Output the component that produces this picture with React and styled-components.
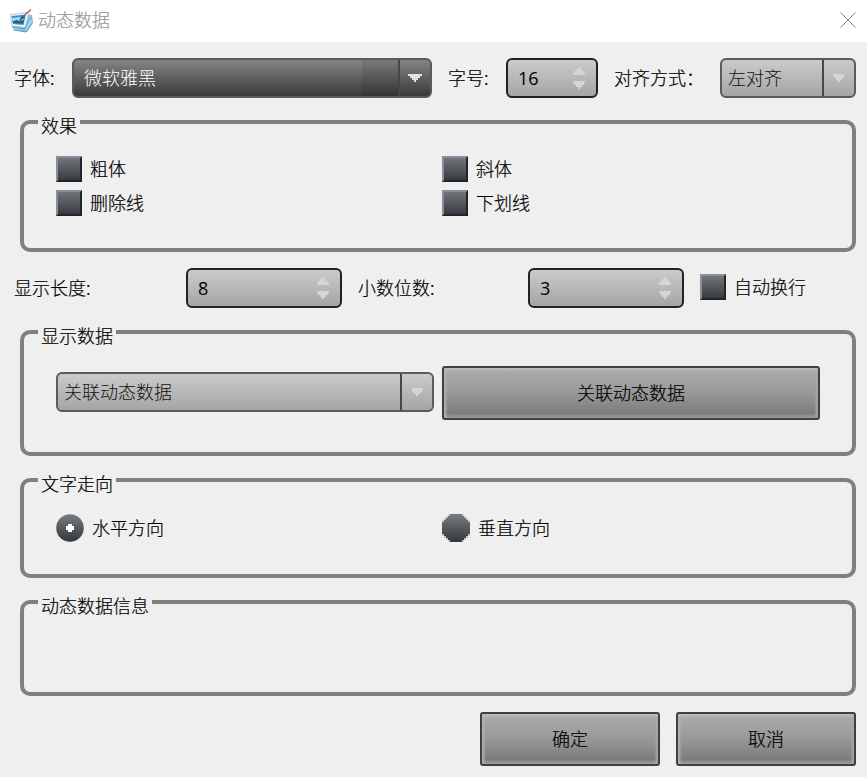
import React from "react";
import styled, { createGlobalStyle, css } from "styled-components";

const GlobalStyle = createGlobalStyle`
  * { box-sizing: border-box; }
  body {
    margin: 0;
    background: #efefef;
    color: #000;
    font: 300 18px/20px "Noto Sans CJK SC", "Noto Sans", sans-serif;
    -webkit-text-stroke: 0.2px currentColor;
  }
`;

const Dialog = styled.div`
  width: 867px;
  height: 777px;
  overflow: hidden;
  background: #efefef;
`;

const TitleBar = styled.header`
  display: flex;
  align-items: center;
  height: 42px;
  padding: 0 11px 3px 9px;
  background: #fff;
  color: #999;
`;

const Title = styled.span`
  flex: 1;
  margin-left: 5px;
  padding-bottom: 2px;
  white-space: nowrap;
`;

const Form = styled.main`
  padding: 16px 11px 0 14px;
`;

const Row = styled.div`
  display: flex;
  align-items: center;
  height: 40px;
`;

const Label = styled.span`
  flex: none;
  width: ${(p) => p.$width}px;
  padding-bottom: 2px;
  margin-left: ${(p) => p.$gap || 0}px;
  white-space: nowrap;
`;

const lightFace = css`
  background: linear-gradient(#cbcbcb, #a5a5a5);
  color: #000;
`;

const darkFace = css`
  background: linear-gradient(#858585, #393939);
  color: #fff;
`;

const Combo = styled.div`
  display: flex;
  flex: none;
  width: ${(p) => p.$width}px;
  height: 40px;
  border: 2px solid #5b5b5b;
  border-radius: 6px;
  ${(p) => (p.$dark ? darkFace : lightFace)}
`;

const ComboText = styled.span`
  display: flex;
  flex: 1;
  align-items: center;
  padding: 0 0 3px ${(p) => (p.$dark ? 10 : 6)}px;
  color: ${(p) => (p.$dark ? "#fff" : "#101010")};
  -webkit-text-stroke: 0;
  ${(p) =>
    p.$dark &&
    css`
      background: linear-gradient(90deg, transparent 288px, rgba(0, 0, 0, 0.09) 288px);
    `}
`;

const ComboArrow = styled.span`
  display: flex;
  align-items: center;
  justify-content: center;
  width: 32px;
  border-left: 2px solid #44484b;
`;

const Spin = styled.div`
  display: flex;
  flex: none;
  align-items: center;
  justify-content: space-between;
  width: ${(p) => p.$width}px;
  height: 40px;
  padding: 0 11px 0 10px;
  border: 2px solid #222;
  border-radius: 6px;
  font-family: "Open Sans", "Noto Sans", sans-serif;
  font-weight: 400;
  -webkit-text-stroke: 0;
  ${lightFace}
`;

const Group = styled.section`
  height: ${(p) => p.$height}px;
  margin: 22px 0 0 6px;
  border: 4px solid #808080;
  border-radius: 10px;
`;

const Legend = styled.h2`
  width: fit-content;
  height: 20px;
  margin: -8px 0 0 14px;
  padding: 0 3px;
  background: #efefef;
  font: inherit;
  line-height: 18px;
`;

const OptionGrid = styled.div`
  display: grid;
  grid-template-columns: 386px 1fr;
  row-gap: 8px;
  padding: 20px 0 0 32px;
`;

const Choice = styled.label`
  display: flex;
  align-items: center;
  gap: 8px;
  white-space: nowrap;
`;

const ChoiceText = styled.span`
  padding-bottom: 2px;
`;

const CheckBox = styled.span`
  width: 26px;
  height: 26px;
  border: 2px solid;
  border-color: #87909a #222427 #222427 #87909a;
  background: linear-gradient(#70757b, #383b3f);
`;

const DataRow = styled.div`
  display: flex;
  align-items: center;
  gap: 8px;
  padding: 20px 32px 0;
`;

const DataSource = styled.div`
  padding-bottom: 2px;
`;

const PushButton = styled.button`
  width: ${(p) => p.$width}px;
  height: 54px;
  padding: 0 0 3px;
  border: 2px solid #404040;
  border-radius: 3px;
  background: linear-gradient(#adadad, #989898 50%, #7b7b7b 92%, #8e8e8e 94%);
  box-shadow: inset 0 3px 2px -1px #bdbdbd, inset 3px 0 3px -1px #b4b4b4,
    inset -3px 0 3px -1px #a8a8a8, inset 0 -2px 1px -1px #969696;
  color: #000;
  font: inherit;
`;

const Actions = styled.footer`
  display: flex;
  justify-content: flex-end;
  gap: 16px;
  margin-top: 16px;
`;

const AppIcon = () => (
  <svg width="24" height="26" viewBox="0 0 24 26">
    <path d="M3 19l2 4 13 2 6-9-1-8-4 0z" fill="#7fbcd9" />
    <path d="M4 20l12 2 5-13 2 7-5 7-13-1z" fill="#b3d9ea" />
    <path d="M3 20l13 2 6-12M5 23l12 2 6-9" fill="none" stroke="#559fc4" />
    <path d="M1 7.5l16-2 3 1-4 14L3 19z" fill="#edf6fa" stroke="#98bdcf" strokeWidth=".7" />
    <path d="M2.5 9L17 7.5 14.5 18 4 17z" fill="#358fd1" />
    <path d="M3 11l8-1 4 3-11 1.5z" fill="#a6dbf2" />
    <path d="M3.5 14.5l4-1.5 3 1 4.5-1-.8 3.5L4 16z" fill="#315f66" />
    <path d="M11 13l4-4" stroke="#413d45" strokeWidth="1.6" />
    <path d="M14 9.5l8-7" stroke="#c9504e" strokeWidth="1.4" />
  </svg>
);

const CloseIcon = () => (
  <svg width="16" height="16" viewBox="0 0 16 16">
    <path d="M.5.5l15 15M15.5.5l-15 15" stroke="#858585" strokeWidth="1" />
  </svg>
);

const DownArrow = ({ dark }) => (
  <svg width="14" height="8" viewBox="0 0 14 8" shapeRendering="crispEdges">
    <path
      d={dark ? "M0 0h14v2h-2v2h-2v2H8v2H6V6H4V4H2V2H0z" : "M1 0h12v1h-1v3h-2v2H8v2H6V6H4V4H2V1H1z"}
      fill={dark ? "#e2e2e2" : "#d5d5d5"}
    />
  </svg>
);

const SpinArrows = () => (
  <svg width="12" height="22" viewBox="0 0 12 22" shapeRendering="crispEdges">
    <path
      d="M5 0h2v2h2v2h2v2h1v2H0V6h1V4h2V2h2zM0 14h12v2h-1v2H9v2H7v2H5v-2H3v-2H1v-2H0z"
      fill="#d5d5d5"
    />
  </svg>
);

const Radio = ({ checked }) => (
  <svg width="28" height="28" viewBox="0 0 28 28">
    <defs>
      <linearGradient id={checked ? "radioOn" : "radioOff"} x2="0" y2="1">
        <stop stopColor="#777c82" />
        <stop offset="1" stopColor="#34373b" />
      </linearGradient>
    </defs>
    {checked ? (
      <>
        <circle cx="14" cy="14" r="13.8" fill="url(#radioOn)" />
        <path d="M12 10h4v2h2v4h-2v2h-4v-2h-2v-4h2z" fill="#fff" />
      </>
    ) : (
      <g shapeRendering="crispEdges">
        <path
          d="M8 0h12v2h2v2h2v2h2v2h2v12h-2v2h-2v2h-2v2h-2v2H8v-2H6v-2H4v-2H2v-2H0V8h2V6h2V4h2V2h2z"
          fill="url(#radioOff)"
        />
        <path
          d="M6 0h2v2H6zM4 2h2v2H4zM2 4h2v2H2zM0 6h2v2H0zM20 0h2v2h-2zM22 2h2v2h-2zM24 4h2v2h-2zM26 6h2v2h-2zM0 20h2v2H0zM2 22h2v2H2zM4 24h2v2H4zM6 26h2v2H6zM26 20h2v2h-2zM24 22h2v2h-2zM22 24h2v2h-2zM20 26h2v2h-2z"
          fill="#c4c6c8"
        />
      </g>
    )}
  </svg>
);

const ComboBox = ({ width, dark, children }) => (
  <Combo $width={width} $dark={dark}>
    <ComboText $dark={dark}>{children}</ComboText>
    <ComboArrow>
      <DownArrow dark={dark} />
    </ComboArrow>
  </Combo>
);

const SpinBox = ({ width, value }) => (
  <Spin $width={width}>
    <span>{value}</span>
    <SpinArrows />
  </Spin>
);

const Check = ({ children }) => (
  <Choice>
    <CheckBox />
    <ChoiceText>{children}</ChoiceText>
  </Choice>
);

const RowTwo = styled(Row)`
  margin-top: 16px;
`;

const WrapOption = styled.div`
  margin-left: 16px;
  padding-bottom: 2px;
`;

export default function App() {
  return (
    <Dialog>
      <GlobalStyle />
      <TitleBar>
        <AppIcon />
        <Title>动态数据</Title>
        <CloseIcon />
      </TitleBar>
      <Form>
        <Row>
          <Label $width={58}>字体:</Label>
          <ComboBox width={360} dark>微软雅黑</ComboBox>
          <Label $width={58} $gap={16}>字号:</Label>
          <SpinBox width={92} value="16" />
          <Label $width={106} $gap={16}>对齐方式：</Label>
          <ComboBox width={136}>左对齐</ComboBox>
        </Row>
        <Group $height={132}>
          <Legend>效果</Legend>
          <OptionGrid>
            <Check>粗体</Check>
            <Check>斜体</Check>
            <Check>删除线</Check>
            <Check>下划线</Check>
          </OptionGrid>
        </Group>
        <RowTwo>
          <Label $width={172}>显示长度:</Label>
          <SpinBox width={156} value="8" />
          <Label $width={170} $gap={16}>小数位数:</Label>
          <SpinBox width={156} value="3" />
          <WrapOption>
            <Check>自动换行</Check>
          </WrapOption>
        </RowTwo>
        <Group $height={126}>
          <Legend>显示数据</Legend>
          <DataRow>
            <DataSource>
              <ComboBox width={378}>关联动态数据</ComboBox>
            </DataSource>
            <PushButton $width={378}>关联动态数据</PushButton>
          </DataRow>
        </Group>
        <Group $height={100}>
          <Legend>文字走向</Legend>
          <OptionGrid>
            <Choice>
              <Radio checked />
              <ChoiceText>水平方向</ChoiceText>
            </Choice>
            <Choice>
              <Radio />
              <ChoiceText>垂直方向</ChoiceText>
            </Choice>
          </OptionGrid>
        </Group>
        <Group $height={96}>
          <Legend>动态数据信息</Legend>
        </Group>
        <Actions>
          <PushButton $width={180}>确定</PushButton>
          <PushButton $width={180}>取消</PushButton>
        </Actions>
      </Form>
    </Dialog>
  );
}
